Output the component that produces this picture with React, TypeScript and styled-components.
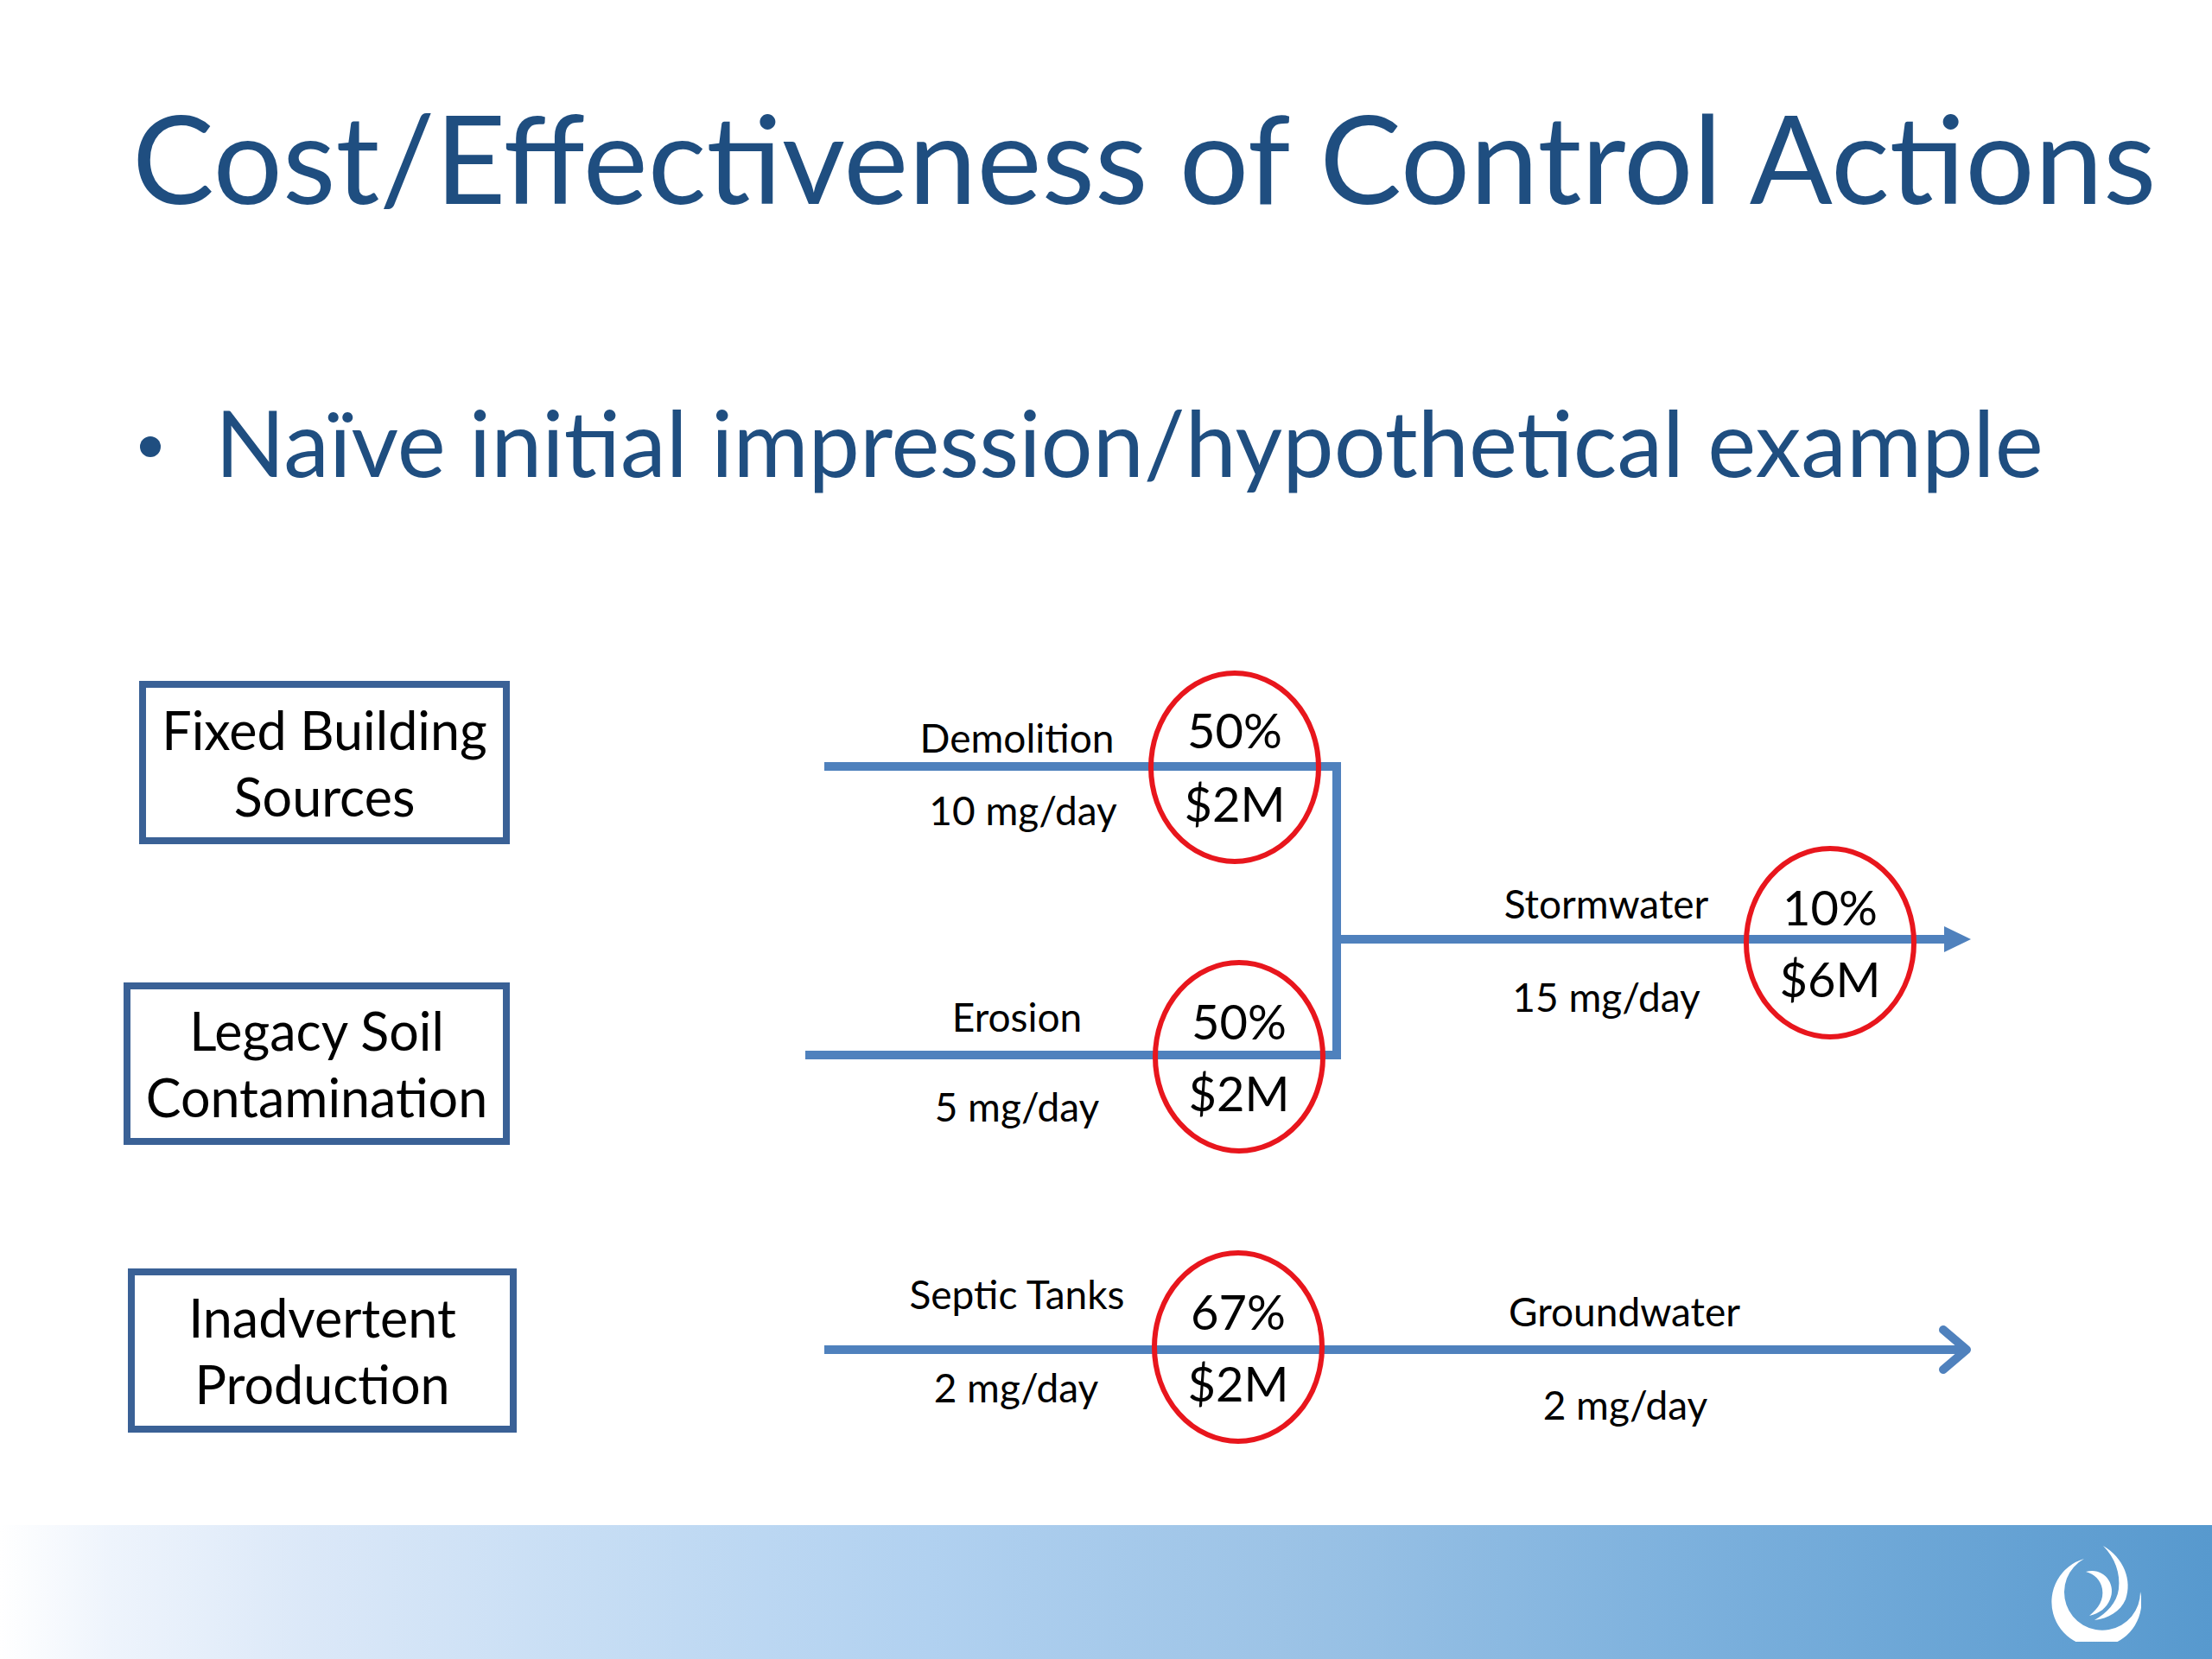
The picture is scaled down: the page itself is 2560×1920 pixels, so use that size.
import React from 'react';
import styled, { createGlobalStyle } from 'styled-components';

// ==========================================
// GLOBAL
// ==========================================

const GlobalStyle = createGlobalStyle`
    html, body {
        margin: 0;
        padding: 0;
        background: #ffffff;
    }
    body {
        font-family: Lato, "Open Sans", "Liberation Sans", sans-serif;
    }
`;

const HEADER_H = 700;
const LINE_BLUE = '#4f81bd';
const RING_RED = '#e8161d';

// baseline -> top for a line-height:1 Lato block
const topFromBaseline = (baseline: number, size: number) =>
    baseline - HEADER_H - size * 0.887;

// ==========================================
// STYLED COMPONENTS
// ==========================================

const Slide = styled.div`
    width: 2560px;
    height: 1920px;
    display: flex;
    flex-direction: column;
    background: #ffffff;
    overflow: hidden;
`;

const Header = styled.header`
    height: ${HEADER_H}px;
    padding: 110px 0 0 153px;
    box-sizing: border-box;
    display: flex;
    flex-direction: column;
`;

const Title = styled.h1`
    margin: 0;
    font-size: 142px;
    font-weight: 400;
    line-height: 1;
    color: #1f4e80;
    white-space: nowrap;
`;

const BulletList = styled.ul`
    list-style: none;
    margin: 206px 0 0 -5px;
    padding: 0;
`;

const BulletItem = styled.li`
    display: flex;
    align-items: center;
    gap: 63px;
    font-size: 106px;
    line-height: 1;
    color: #1f4e80;
    white-space: nowrap;

    &::before {
        content: '';
        width: 24px;
        height: 24px;
        border-radius: 50%;
        background: #1f4e80;
        margin-left: 14px;
        margin-top: 12px;
        flex-shrink: 0;
    }
`;

const Diagram = styled.div`
    position: relative;
    flex: 1;
`;

const Wires = styled.svg`
    position: absolute;
    inset: 0;
    width: 100%;
    height: 100%;
`;

const SourceBox = styled.div<{ $x: number; $y: number; $w: number; $h: number }>`
    position: absolute;
    left: ${p => p.$x}px;
    top: ${p => p.$y - HEADER_H}px;
    width: ${p => p.$w}px;
    height: ${p => p.$h}px;
    box-sizing: border-box;
    border: 8px solid #3a6196;
    display: flex;
    flex-direction: column;
    align-items: center;
    justify-content: center;
    font-size: 61px;
    line-height: 77px;
    color: #000000;
    text-align: center;
    white-space: nowrap;
`;

const Label = styled.span<{ $x: number; $top: number; $size: number }>`
    position: absolute;
    left: ${p => p.$x}px;
    top: ${p => p.$top}px;
    transform: translateX(-50%);
    font-size: ${p => p.$size}px;
    line-height: 1;
    color: #000000;
    white-space: nowrap;
`;

const Footer = styled.footer`
    height: 155px;
    display: flex;
    justify-content: flex-end;
    align-items: flex-start;
    padding: 24px 82px 0 0;
    box-sizing: border-box;
    background: linear-gradient(90deg,
        #ffffff 0%,
        #eef4fc 5%,
        #dbe8f8 14%,
        #c6ddf4 27%,
        #b1d1f0 42%,
        #9cc3e6 58%,
        #7db1dd 76%,
        #5799ce 100%);
`;

const LogoMark = styled.svg`
    width: 106px;
    height: 111px;
`;

// ==========================================
// DATA
// ==========================================

const SOURCES = [
    { x: 161, y: 788, w: 429, h: 189, lines: ['Fixed Building', 'Sources'] },
    { x: 143, y: 1137, w: 447, h: 188, lines: ['Legacy Soil', 'Contamination'] },
    { x: 148, y: 1468, w: 450, h: 190, lines: ['Inadvertent', 'Production'] },
];

// center x, baseline y (page coords)
const FLOW_LABELS = [
    { text: 'Demolition', x: 1177, b: 872 },
    { text: '10 mg/day', x: 1184, b: 956 },
    { text: 'Erosion', x: 1177, b: 1195 },
    { text: '5 mg/day', x: 1177, b: 1299 },
    { text: 'Stormwater', x: 1859, b: 1064 },
    { text: '15 mg/day', x: 1859, b: 1172 },
    { text: 'Septic Tanks', x: 1177, b: 1516 },
    { text: '2 mg/day', x: 1176, b: 1624 },
    { text: 'Groundwater', x: 1880, b: 1536 },
    { text: '2 mg/day', x: 1881, b: 1644 },
];

const RINGS = [
    { cx: 1429, cy: 888, top: '50%', bottom: '$2M', tb: 867, bb: 952 },
    { cx: 1434, cy: 1223, top: '50%', bottom: '$2M', tb: 1204, bb: 1287 },
    { cx: 2118, cy: 1091, top: '10%', bottom: '$6M', tb: 1072, bb: 1155 },
    { cx: 1433, cy: 1559, top: '67%', bottom: '$2M', tb: 1540, bb: 1623 },
];

const LABEL_SIZE = 46;
const RING_SIZE = 56;

// ==========================================
// COMPONENT
// ==========================================

const Logo = () => (
    <LogoMark viewBox="0 0 106 111">
        <path fill="#ffffff" d="M 40 15 A 52 52 0 1 0 105 53 A 44 44 0 1 1 40 15 Z" />
        <path fill="#ffffff" d="M 42 30 C 62 24, 78 44, 70 62 C 66 72, 58 78, 46 81 C 57 72, 63 62, 61 50 C 59 39, 52 33, 42 30 Z" />
        <path fill="#ffffff" d="M 62 0 C 86 14, 96 40, 88 62 C 82 76, 68 84, 52 86 C 66 78, 78 66, 80 50 C 82 32, 76 14, 62 0 Z" />
    </LogoMark>
);

const App: React.FC = () => {
    return (
        <>
            <GlobalStyle />
            <Slide>
                <Header>
                    <Title>Cost/Effectiveness of Control Actions</Title>
                    <BulletList>
                        <BulletItem>Naïve initial impression/hypothetical example</BulletItem>
                    </BulletList>
                </Header>

                <Diagram>
                    <Wires viewBox={`0 ${HEADER_H} 2560 1065`} preserveAspectRatio="none">
                        {/* flows */}
                        <g stroke={LINE_BLUE} strokeWidth="10" fill="none">
                            <line x1="954" y1="887" x2="1547" y2="887" />
                            <line x1="932" y1="1221" x2="1547" y2="1221" />
                            <polyline points="1542,887 1547,887 1547,1221 1542,1221" />
                            <line x1="1547" y1="1087" x2="2254" y2="1087" />
                            <line x1="954" y1="1562" x2="2272" y2="1562" />
                            <polyline points="2249,1539 2276,1562 2249,1585" strokeLinecap="round" strokeLinejoin="round" />
                        </g>
                        <polygon points="2250,1072 2281,1087 2250,1102" fill={LINE_BLUE} />

                        {/* cost rings */}
                        <g stroke={RING_RED} strokeWidth="6" fill="none">
                            {RINGS.map((r, i) => (
                                <ellipse key={i} cx={r.cx} cy={r.cy} rx="97" ry="109" />
                            ))}
                        </g>
                    </Wires>

                    {SOURCES.map((s, i) => (
                        <SourceBox key={i} $x={s.x} $y={s.y} $w={s.w} $h={s.h}>
                            {s.lines.map(l => <span key={l}>{l}</span>)}
                        </SourceBox>
                    ))}

                    {FLOW_LABELS.map((l, i) => (
                        <Label key={i} $x={l.x} $top={topFromBaseline(l.b, LABEL_SIZE)} $size={LABEL_SIZE}>
                            {l.text}
                        </Label>
                    ))}

                    {RINGS.map((r, i) => (
                        <React.Fragment key={i}>
                            <Label $x={r.cx} $top={topFromBaseline(r.tb, RING_SIZE)} $size={RING_SIZE}>{r.top}</Label>
                            <Label $x={r.cx} $top={topFromBaseline(r.bb, RING_SIZE)} $size={RING_SIZE}>{r.bottom}</Label>
                        </React.Fragment>
                    ))}
                </Diagram>

                <Footer>
                    <Logo />
                </Footer>
            </Slide>
        </>
    );
};

export default App;
